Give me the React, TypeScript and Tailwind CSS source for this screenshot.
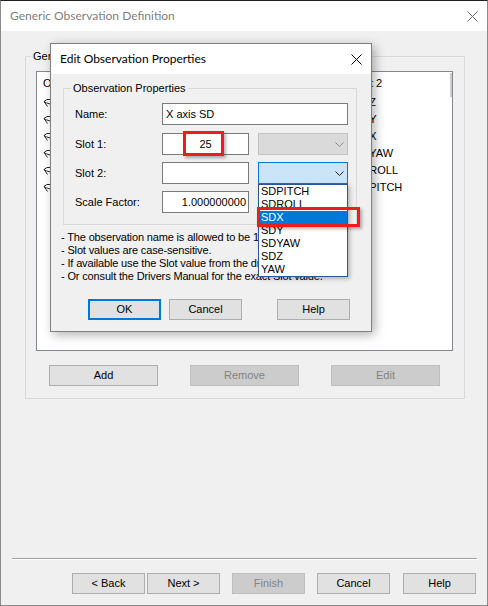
import React from "react";

type BtnProps = {
  children: React.ReactNode;
  variant?: "normal" | "default" | "disabled";
  w?: string;
  className?: string;
};

function Btn({ children, variant = "normal", w = "w-[73px]", className = "" }: BtnProps) {
  const v =
    variant === "default"
      ? "bg-[#e1e1e1] border-2 border-[#0078d7]"
      : variant === "disabled"
      ? "bg-[#cccccc] border border-[#bfbfbf] text-[#838383]"
      : "bg-[#e1e1e1] border border-[#adadad]";
  return (
    <div className={`h-[21px] ${w} shrink-0 flex items-center justify-center leading-none ${v} ${className}`}>
      {children}
    </div>
  );
}

function CloseX({ color }: { color: string }) {
  return (
    <svg width="11" height="11" viewBox="0 0 11 11" className="shrink-0">
      <path d="M0.5 0.5 L10.5 10.5 M10.5 0.5 L0.5 10.5" stroke={color} strokeWidth="1" fill="none" />
    </svg>
  );
}

function Chevron({ color }: { color: string }) {
  return (
    <svg width="9" height="5" viewBox="0 0 9 5" className="shrink-0">
      <polyline points="0.5,0.5 4.5,4.5 8.5,0.5" fill="none" stroke={color} strokeWidth="1" />
    </svg>
  );
}

function RowIcon() {
  return (
    <svg width="10" height="10" viewBox="0 0 10 10" className="shrink-0">
      <path d="M8.5 1.5 Q3 0.5 1 3.5 Q3 5 7 6 M1 3.5 L4.5 8.5" fill="none" stroke="#2a2a2a" strokeWidth="1" />
    </svg>
  );
}

const bgRows = [
  { name: "Z axis SD", v: "SDZ" },
  { name: "Y axis SD", v: "SDY" },
  { name: "X axis SD", v: "SDX" },
  { name: "Yaw SD", v: "SDYAW" },
  { name: "Roll SD", v: "SDROLL" },
  { name: "Pitch SD", v: "SDPITCH" },
];

const dropItems = ["SDPITCH", "SDROLL", "SDX", "SDY", "SDYAW", "SDZ", "YAW"];

export default function App() {
  return (
    <div className="relative w-[488px] h-[606px] overflow-hidden flex flex-col bg-[#f0f0f0] border-t border-x border-b border-t-[#1f1f1f] border-x-[#8a8a8a] border-b-[#8a8a8a] font-['Liberation_Sans',Arial,sans-serif] text-[11px] text-black">
      {/* Outer title bar */}
      <div className="h-[30px] shrink-0 bg-white flex items-center justify-between pl-[9px] pr-[9px]">
        <span className="font-['Lato','Liberation_Sans',sans-serif] text-[12px] text-[#7f7f7f]">
          Generic Observation Definition
        </span>
        <CloseX color="#6f6f6f" />
      </div>

      {/* Outer body */}
      <div className="flex-1 flex flex-col">
        <fieldset className="ml-[24px] mt-[19px] w-[440px] border border-[#d9d9d9]">
          <legend className="ml-[5px] px-[2px] leading-[12px]">Generic Observations</legend>
          <div className="pl-[10px] pr-[11px] pt-[9px] pb-[12px] flex flex-col">
            <div className="relative w-[417px] h-[280px] border border-[#828790] bg-white overflow-hidden">
              <div className="h-[22px] flex items-center pl-[6px] whitespace-nowrap">
                <span className="w-[311px]">Observation</span>
                <span>Slot 2</span>
              </div>
              {bgRows.map((r) => (
                <div key={r.v} className="h-[17px] flex items-center pl-[6px] whitespace-nowrap">
                  <div className="w-[311px] flex items-center gap-[3px]">
                    <RowIcon />
                    <span>{r.name}</span>
                  </div>
                  <span>{r.v}</span>
                </div>
              ))}
              <div className="absolute right-0 top-[1px] w-[2px] h-[24px] bg-[#cdcdcd]" />
            </div>
            <div className="mt-[14px] flex pl-[13px]">
              <Btn w="w-[109px]">Add</Btn>
              <Btn w="w-[109px]" variant="disabled" className="ml-[32px]">Remove</Btn>
              <Btn w="w-[109px]" variant="disabled" className="ml-[32px]">Edit</Btn>
            </div>
          </div>
        </fieldset>

        <div className="mt-auto">
          <div className="ml-[11px] mr-[10px] border-t border-b border-t-[#a0a0a0] border-b-white" />
          <div className="mt-[13px] mb-[11px] pr-[11px] flex justify-end">
            <Btn>&lt; Back</Btn>
            <Btn className="ml-[2px]">Next &gt;</Btn>
            <Btn variant="disabled" className="ml-[12px]">Finish</Btn>
            <Btn className="ml-[12px]">Cancel</Btn>
            <Btn className="ml-[13px]">Help</Btn>
          </div>
        </div>
      </div>

      {/* Modal dialog */}
      <div className="absolute left-[49px] top-[42px] w-[322px] h-[289px] border border-[#7f7f7f] bg-[#f0f0f0] flex flex-col shadow-[3px_3px_10px_rgba(0,0,0,0.3)]">
        <div className="h-[30px] shrink-0 bg-white flex items-center justify-between pl-[9px] pr-[9px]">
          <span className="font-['Lato','Liberation_Sans',sans-serif] text-[12px] text-black">
            Edit Observation Properties
          </span>
          <CloseX color="#000000" />
        </div>

        <fieldset className="ml-[12px] mt-[8px] w-[294px] border border-[#d9d9d9]">
          <legend className="ml-[7px] px-[2px] leading-[12px]">Observation Properties</legend>
          <div className="pl-[11px] pt-[9px] pb-[11px] flex flex-col">
            <div className="flex items-center h-[22px]">
              <span className="w-[87px]">Name:</span>
              <div className="w-[186px] h-[22px] border border-[#7a7a7a] bg-white flex items-center pl-[3px]">
                X axis SD
              </div>
            </div>
            <div className="flex items-center h-[22px] mt-[8px]">
              <span className="w-[87px]">Slot 1:</span>
              <div className="w-[87px] h-[22px] border border-[#7a7a7a] bg-white flex items-center justify-center">
                25
              </div>
              <div className="ml-[9px] w-[90px] h-[22px] border border-[#c3c3c3] bg-[#dadada] flex items-center justify-end pr-[3px]">
                <Chevron color="#8a8a8a" />
              </div>
            </div>
            <div className="flex items-center h-[22px] mt-[7px]">
              <span className="w-[87px]">Slot 2:</span>
              <div className="w-[87px] h-[22px] border border-[#7a7a7a] bg-white" />
              <div className="ml-[9px] w-[90px] h-[22px] border border-[#0078d7] bg-[#cce4f7] flex items-center justify-end pr-[3px]">
                <Chevron color="#222222" />
              </div>
            </div>
            <div className="flex items-center h-[22px] mt-[7px]">
              <span className="w-[87px]">Scale Factor:</span>
              <div className="w-[87px] h-[22px] border border-[#7a7a7a] bg-white flex items-center justify-end pr-[2px] overflow-hidden whitespace-nowrap">
                1.000000000
              </div>
            </div>
          </div>
        </fieldset>

        <div className="mt-[6px] pl-[10px] leading-[13px] tracking-[-0.15px] whitespace-nowrap">
          <div>- The observation name is allowed to be 1 to 40 chars.</div>
          <div>- Slot values are case-sensitive.</div>
          <div>- If available use the Slot value from the drop-down list.</div>
          <div>- Or consult the Drivers Manual for the exact Slot value.</div>
        </div>

        <div className="mt-auto mb-[11px] flex pl-[37px]">
          <Btn variant="default">OK</Btn>
          <Btn className="ml-[8px]">Cancel</Btn>
          <Btn className="ml-[35px]">Help</Btn>
        </div>
      </div>

      {/* Open dropdown list */}
      <div className="absolute left-[257px] top-[183px] w-[90px] border border-[#2b5797] bg-white shadow-[2px_2px_4px_rgba(0,0,0,0.25)]">
        {dropItems.map((it) => (
          <div
            key={it}
            className={`h-[13px] leading-[13px] pl-[2px] ${it === "SDX" ? "bg-[#0078d7] text-white" : ""}`}
          >
            {it}
          </div>
        ))}
      </div>

      {/* Red annotation boxes */}
      <div className="absolute left-[182px] top-[130px] w-[41px] h-[25px] border-[3px] border-[#ee1c1c] shadow-[2px_2px_3px_rgba(0,0,0,0.3)]" />
      <div className="absolute left-[256px] top-[206px] w-[103px] h-[20px] border-[3px] border-[#ee1c1c] shadow-[2px_2px_3px_rgba(0,0,0,0.3)]" />
    </div>
  );
}
